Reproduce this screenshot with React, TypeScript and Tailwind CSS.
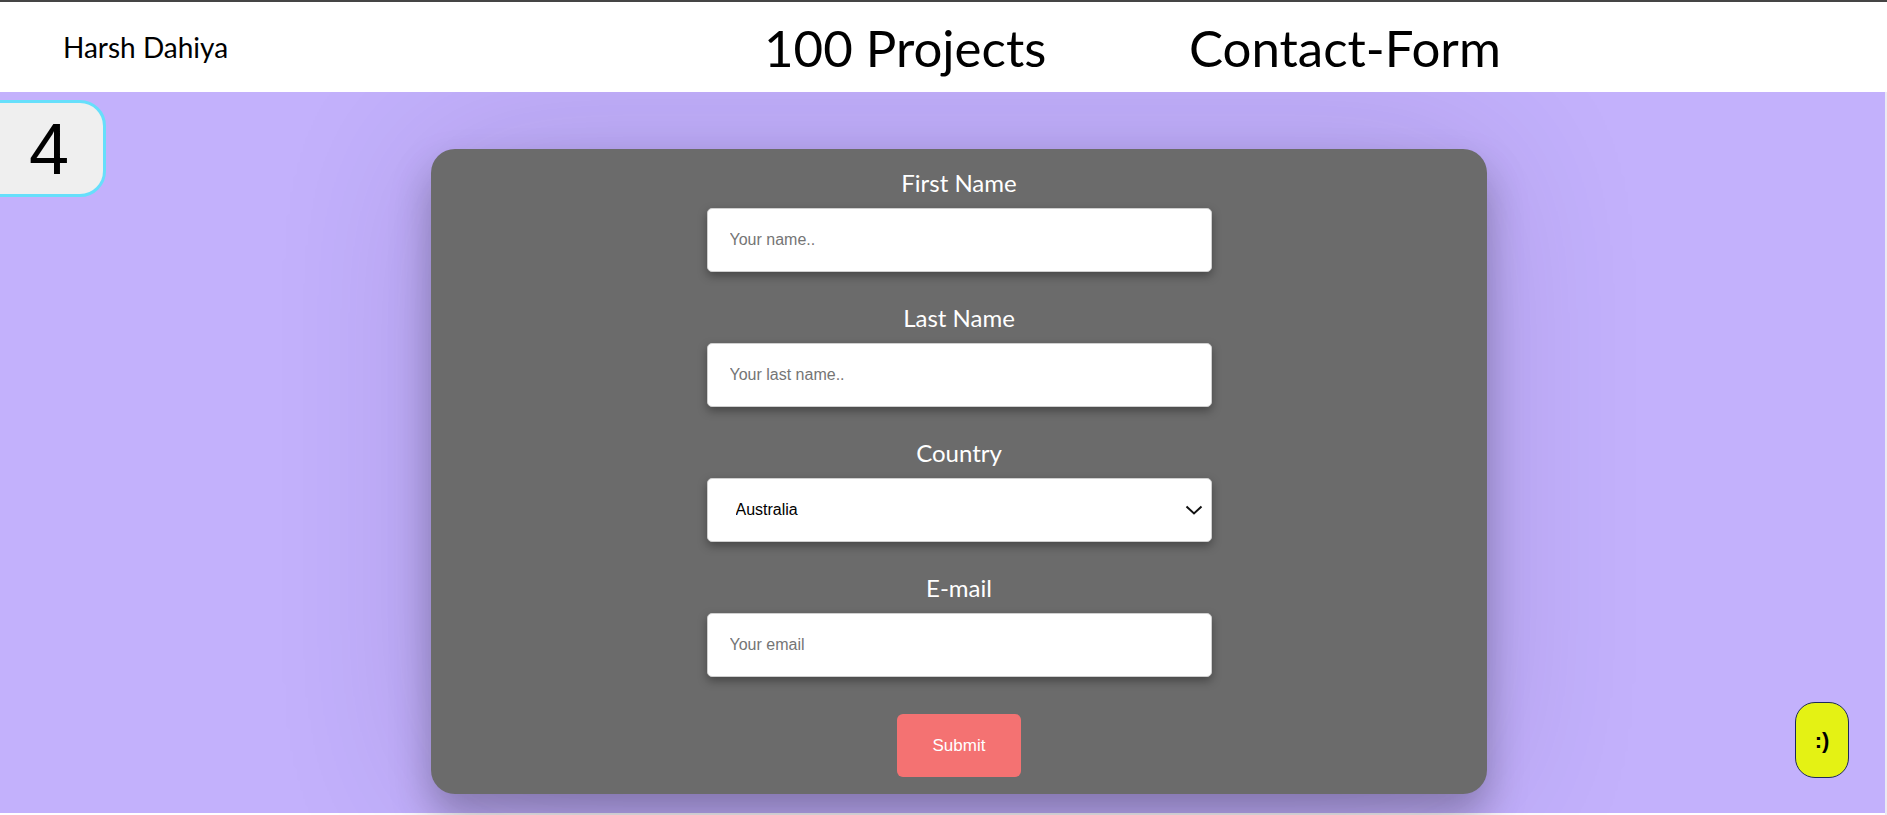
import { FC } from "react";

const labelFont = { fontFamily: "Lato, 'Noto Sans', sans-serif" };

const inputClass =
  "w-[505px] h-[64px] rounded-[5px] border border-[#cfcfcf] bg-white pl-[22px] text-[16px] text-black placeholder:text-[#757575] shadow-[0_4px_10px_rgba(0,0,0,0.35)] outline-none font-['Liberation_Sans',Arial,sans-serif]";

const Field: FC<{ label: string; children: React.ReactNode }> = ({ label, children }) => (
  <div className="flex flex-col items-center">
    <label className="text-[24px] leading-[30px] text-white mb-[10px]" style={labelFont}>
      {label}
    </label>
    {children}
  </div>
);

const App: FC = () => {
  return (
    <div className="relative w-[1887px] h-[815px] overflow-hidden bg-white border-t-2 border-[#454545]">
      {/* header */}
      <header className="relative z-10 flex items-center h-[90px] bg-white text-black" style={labelFont}>
        <div className="w-[764px] pl-[63px] text-[28px]">Harsh Dahiya</div>
        <div className="w-[425px] text-[51px] leading-none">100 Projects</div>
        <div className="text-[51px] leading-none">Contact-Form</div>
      </header>

      {/* main */}
      <main className="h-[721px] w-[1885px] bg-[#c3b1fc] pt-[57px]">
        <form
          className="ml-[431px] w-[1056px] h-[645px] rounded-[24px] bg-[#6b6b6b] pt-[19px] flex flex-col items-center gap-[31px] shadow-[0_0_160px_rgba(40,20,90,0.16),0_22px_40px_rgba(0,0,0,0.28)]"
          onSubmit={(e) => e.preventDefault()}
        >
          <Field label="First Name">
            <input className={inputClass} placeholder="Your name.." />
          </Field>
          <Field label="Last Name">
            <input className={inputClass} placeholder="Your last name.." />
          </Field>
          <Field label="Country">
            <div className="relative">
              <select className={inputClass + " appearance-none pl-[28px]"} defaultValue="australia">
                <option value="australia">Australia</option>
                <option value="canada">Canada</option>
                <option value="usa">USA</option>
              </select>
              <svg
                className="absolute right-[9px] top-1/2 -translate-y-1/2 pointer-events-none"
                width="18"
                height="10"
                viewBox="0 0 18 10"
                fill="none"
                stroke="#111"
                strokeWidth="2"
              >
                <path d="M1.5 1.5 L9 8.5 L16.5 1.5" />
              </svg>
            </div>
          </Field>
          <Field label="E-mail">
            <input className={inputClass} placeholder="Your email" />
          </Field>
          <button
            type="submit"
            className="mt-[6px] w-[124px] h-[63px] rounded-[6px] bg-[#f47272] text-white text-[17px] font-['Liberation_Sans',Arial,sans-serif]"
          >
            Submit
          </button>
        </form>
      </main>

      {/* number badge */}
      <div className="absolute z-20 left-[-30px] top-[98px] w-[136px] h-[97px] rounded-[26px] border-[3px] border-[#66dffb] bg-[#efefef] flex items-center justify-center pl-[22px]">
        <span className="text-[72px] leading-none text-black font-['Liberation_Sans',Arial,sans-serif]">4</span>
      </div>

      {/* smiley button */}
      <button className="absolute z-20 left-[1795px] top-[700px] w-[54px] h-[76px] rounded-[20px] border border-[#1e2a5a] bg-[#e4f214] text-[22px] font-bold text-black font-['Liberation_Sans',Arial,sans-serif]">
        :)
      </button>

      {/* window edge */}
      <div className="absolute z-20 right-0 top-[90px] w-[2px] h-[725px] bg-[#ebebf3]" />
    </div>
  );
};

export default App;
